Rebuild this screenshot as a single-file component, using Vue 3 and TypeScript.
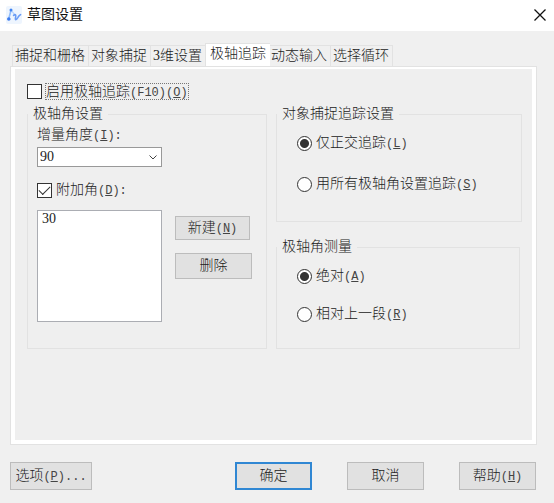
<script setup lang="ts">
import { ref } from 'vue'

const tabs: string[] = ['捕捉和栅格', '对象捕捉', '3维设置', '极轴追踪', '动态输入', '选择循环']
const activeTab = ref<string>('极轴追踪')
const polarEnabled = ref<boolean>(false)
const increment = ref<string>('90')
const extraAngles = ref<boolean>(true)
const angles = ref<string[]>(['30'])
const chosen = ref<string[]>([])
const trackMode = ref<string>('ortho')
const measureMode = ref<string>('absolute')
</script>

<template>
  <div class="dialog">
    <header class="titlebar">
      <svg class="logo" viewBox="0 0 16 18" aria-hidden="true">
        <rect width="16" height="18" rx="2" fill="#eef5fe" />
        <path d="M5 4.2 2.7 13" stroke="#8fbcfa" stroke-width="1.6" fill="none" />
        <path d="M5 4.2 9 9" stroke="#b9d4fb" stroke-width="1.2" fill="none" />
        <path d="M7.6 9.4C9.4 7.8 10.2 9 9.6 11.2 8.8 14.6 10.4 14.2 11.8 11.6 12.6 10 13.2 9.6 14.6 8.6" stroke="#6a9cf5" stroke-width="1.6" fill="none" stroke-linecap="round" />
        <circle cx="5" cy="4" r="1.5" fill="#3f83f2" />
        <circle cx="2.8" cy="13" r="1.8" fill="#3d7cf0" />
      </svg>
      <h1>草图设置</h1>
      <button class="close" type="button" aria-label="关闭">
        <svg viewBox="0 0 12 12"><path d="M.5.5l11 11M11.500.5l-11 11" stroke="#111" stroke-width="1.3" /></svg>
      </button>
    </header>

    <main>
      <div class="tabs" role="tablist">
        <button
          v-for="tab in tabs"
          :key="tab"
          type="button"
          role="tab"
          class="tab"
          :class="{ active: tab === activeTab }"
          :aria-selected="tab === activeTab"
          @click="activeTab = tab"
        >{{ tab }}</button>
      </div>

      <section class="pane">
        <label class="check enable">
          <input v-model="polarEnabled" type="checkbox" />
          <span class="focus">启用极轴追踪<span class="key">(F10)(<u>O</u>)</span></span>
        </label>

        <div class="groups">
          <fieldset class="polar">
            <legend>极轴角设置</legend>
            <label class="line" for="increment">增量角度<span class="key">(<u>I</u>):</span></label>
            <div class="combo">
              <select id="increment" v-model="increment">
                <option>90</option>
                <option>45</option>
                <option>30</option>
              </select>
              <svg viewBox="0 0 8 5" aria-hidden="true"><path d="M.5.5 4 4 7.500.5" stroke="#444" fill="none" /></svg>
            </div>
            <label class="check extra">
              <input v-model="extraAngles" type="checkbox" />
              <span>附加角<span class="key">(<u>D</u>):</span></span>
            </label>
            <div class="angles">
              <select v-model="chosen" class="list" multiple aria-label="附加角">
                <option v-for="angle in angles" :key="angle">{{ angle }}</option>
              </select>
              <div class="actions">
                <button class="btn new" type="button">新建<span class="key">(<u>N</u>)</span></button>
                <button class="btn delete" type="button">删除</button>
              </div>
            </div>
          </fieldset>

          <div class="side">
            <fieldset class="tracking">
              <legend>对象捕捉追踪设置</legend>
              <label class="radio">
                <input v-model="trackMode" type="radio" name="track" value="ortho" />
                <span>仅正交追踪<span class="key">(<u>L</u>)</span></span>
              </label>
              <label class="radio">
                <input v-model="trackMode" type="radio" name="track" value="all" />
                <span>用所有极轴角设置追踪<span class="key">(<u>S</u>)</span></span>
              </label>
            </fieldset>
            <fieldset class="measure">
              <legend>极轴角测量</legend>
              <label class="radio">
                <input v-model="measureMode" type="radio" name="measure" value="absolute" />
                <span>绝对<span class="key">(<u>A</u>)</span></span>
              </label>
              <label class="radio">
                <input v-model="measureMode" type="radio" name="measure" value="relative" />
                <span>相对上一段<span class="key">(<u>R</u>)</span></span>
              </label>
            </fieldset>
          </div>
        </div>
      </section>

      <footer>
        <button class="btn options" type="button">选项<span class="key">(<u>P</u>)...</span></button>
        <div class="confirm">
          <button class="btn primary" type="button">确定</button>
          <button class="btn" type="button">取消</button>
          <button class="btn" type="button">帮助<span class="key">(<u>H</u>)</span></button>
        </div>
      </footer>
    </main>
  </div>
</template>

<style>
body {
  background: #f0f0f0;
}
</style>

<style scoped>
.dialog {
  color: #222;
  font-family: "Liberation Serif", "Noto Sans CJK SC", serif;
  font-size: 14px;
  font-weight: 300;
  line-height: 20px;
}

.dialog *,
.dialog *::after {
  box-sizing: border-box;
}

button,
select,
input {
  margin: 0;
  color: inherit;
  font: inherit;
}

.key {
  color: #444;
  font-family: "Liberation Mono", monospace;
  font-size: 12px;
}

u {
  text-underline-offset: 1px;
}

.titlebar {
  display: flex;
  align-items: center;
  height: 31px;
  padding: 0 8px 2px 6px;
  background: #fff;
}

.logo {
  width: 16px;
  height: 18px;
}

h1 {
  flex: 1;
  margin: 0 0 0 5px;
  color: #111;
  font-size: 14px;
  font-weight: 400;
}

.close {
  display: flex;
  padding: 0;
  border: 0;
  background: none;
}

.close svg {
  width: 12px;
  height: 12px;
}

main {
  padding: 12px 17px 14px 10px;
}

.tabs {
  display: flex;
  align-items: flex-end;
  height: 23px;
  padding-left: 2px;
}

.tab {
  height: 21px;
  padding: 0 3px 0 2px;
  border: 1px solid #e2e2e2;
  border-width: 1px 0 0 1px;
  background: #f0f0f0;
  line-height: 18px;
  white-space: nowrap;
}

.tab:last-child {
  border-right-width: 1px;
}

.tab.active {
  z-index: 1;
  height: 23px;
  margin-right: -2px;
  padding: 0 4px 2px;
  background: #fff;
}

.pane {
  padding: 14px 14px 95px 12px;
  border: 1px solid #e2e2e2;
  background: #efefef;
  box-shadow: inset 4px 0 #fff, inset -4px 0 #fff, inset 0 2px #fff, inset 0 -4px #fff;
}

.check,
.radio {
  display: flex;
  align-items: center;
}

.enable {
  gap: 3px;
  height: 20px;
  padding-left: 4px;
}

.focus {
  height: 17px;
  border: 1px dotted #777;
  line-height: 15px;
}

.extra {
  gap: 4px;
  margin-top: 13px;
}

input {
  flex: none;
  width: 15px;
  height: 15px;
  border: 1px solid #333;
  background: #fff;
  appearance: none;
}

input[type="checkbox"]:checked::after {
  display: block;
  width: 11px;
  height: 6px;
  margin: 2px 0 0 1px;
  border: solid #333;
  border-width: 0 0 1px 1px;
  content: "";
  transform: rotate(-45deg);
}

input[type="radio"] {
  border-radius: 50%;
}

input[type="radio"]:checked {
  background: radial-gradient(circle, #333 0 4px, #fff 5px);
}

.groups {
  display: grid;
  grid-template-columns: minmax(0, 240fr) minmax(0, 246fr);
  gap: 9px;
  margin-top: 3px;
  padding-left: 4px;
}

fieldset {
  min-width: 0;
  margin: 0;
  border: 1px solid #e2e2e2;
}

legend {
  padding: 0 5px;
}

.polar {
  padding: 1px 9px 26px;
}

.polar legend {
  margin-left: -9px;
}

.line {
  display: block;
}

.combo {
  display: grid;
  align-items: center;
  width: 125px;
  margin-top: 1px;
}

.combo select,
.combo svg {
  grid-area: 1 / 1;
}

.combo select {
  height: 20px;
  padding: 0 2px;
  border: 1px solid #999;
  border-radius: 0;
  background: #fff;
  line-height: 18px;
  appearance: none;
}

.combo svg {
  justify-self: end;
  width: 8px;
  height: 5px;
  margin-right: 5px;
  pointer-events: none;
}

.angles {
  display: flex;
  gap: 13px;
  margin-top: 9px;
}

.list {
  width: 125px;
  height: 112px;
  padding: 0;
  overflow: auto;
  border: 1px solid #abadb3;
  border-radius: 0;
  background: #fff;
}

.list option {
  padding: 0 4px;
}

.actions {
  display: flex;
  flex-direction: column;
  align-items: flex-start;
  gap: 13px;
  padding-top: 6px;
}

.side {
  display: flex;
  flex-direction: column;
  gap: 15px;
}

.side legend {
  margin-left: -20px;
}

.radio {
  gap: 4px;
}

.tracking {
  display: flex;
  flex-direction: column;
  gap: 20px;
  padding: 9px 20px 26px;
}

.measure {
  display: flex;
  flex-direction: column;
  gap: 17px;
  margin-right: 2px;
  padding: 9px 20px 23px;
}

.btn {
  width: 77px;
  height: 28px;
  padding: 0;
  border: 1px solid #bcbcbc;
  background: #e1e1e1;
  white-space: nowrap;
}

.new {
  width: 75px;
  height: 24px;
}

.delete {
  height: 26px;
}

.options {
  width: 82px;
}

.primary {
  border: 2px solid #3087d3;
}

footer {
  display: flex;
  justify-content: space-between;
  margin-top: 17px;
  padding-right: 1px;
}

.confirm {
  display: flex;
  gap: 35px;
}
</style>
